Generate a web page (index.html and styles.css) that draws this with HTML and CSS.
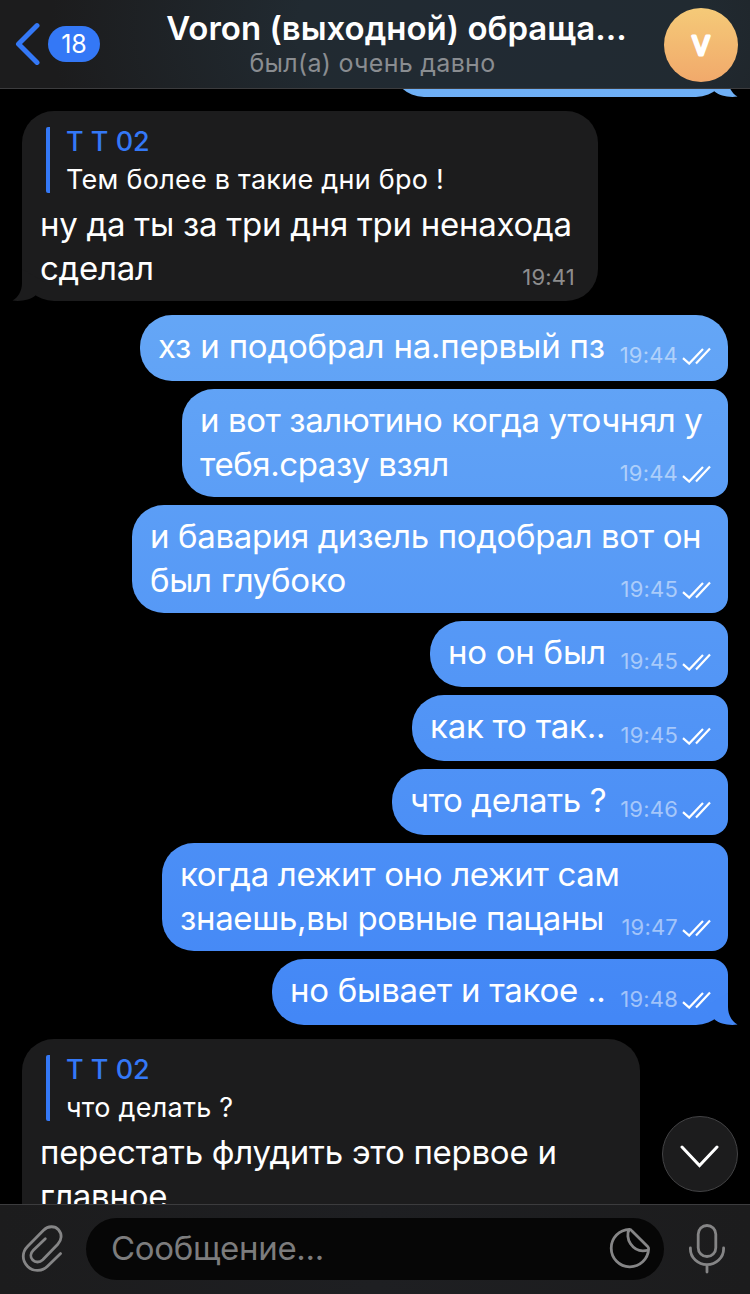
FILE: index.html
```html
<!DOCTYPE html>
<html lang="ru">
<head>
  <meta charset="UTF-8" />
  <meta name="viewport" content="width=device-width, initial-scale=1" />
  <title>Voron</title>
  <link rel="stylesheet" href="styles.css">
</head>
<body>

<!-- Shared shapes -->
<svg class="defs" width="0" height="0">
  <symbol id="checks" viewBox="0 0 30 18">
    <path d="M2 11.2 L8.2 16.6 L22 2 M15 16.6 L29 1.6" fill="none" stroke="#fff" stroke-width="2.2" />
  </symbol>
  <symbol id="tail" viewBox="0 0 34 32">
    <path d="M24 0 V14 C24 22 28 28.5 33.5 31.6 C24 32.6 16 31 10 26 L0 14 Z" />
  </symbol>
</svg>

<div class="app">
  <!-- Header -->
  <header class="header">
    <div class="back">
      <svg width="26" height="44" viewBox="0 0 26 44"><path d="M22 3.6 L3.5 22 L22 40.4" fill="none" stroke="#3478f6" stroke-width="5" stroke-linecap="round" stroke-linejoin="round" /></svg>
      <span class="unread">18</span>
    </div>
    <div class="peer">
      <div class="title">Voron (выходной) обраща...</div>
      <div class="status">был(а) очень давно</div>
    </div>
    <div class="avatar">
      <svg width="74" height="74" viewBox="0 0 74 74"><text x="37" y="47" text-anchor="middle">V</text></svg>
    </div>
  </header>

  <!-- Messages -->
  <main class="chat">
    <div class="bubble out last prev"><svg class="tail"><use href="#tail" /></svg></div>

    <div class="bubble in group reply-a">
      <div class="quote">
        <div class="author">T T 02</div>
        <div class="quoted">Тем более в такие дни бро !</div>
      </div>
      <div class="body">
        <div class="text">ну да ты за три дня три ненахода<br>сделал</div>
        <div class="meta">19:41</div>
      </div>
      <svg class="tail"><use href="#tail" /></svg>
    </div>

    <div class="bubble out first group m1">
      <div class="text">хз и подобрал на.первый пз</div>
      <div class="meta">19:44<svg class="checks"><use href="#checks" /></svg></div>
    </div>
    <div class="bubble out m2">
      <div class="text">и вот залютино когда уточнял у<br>тебя.сразу взял</div>
      <div class="meta">19:44<svg class="checks"><use href="#checks" /></svg></div>
    </div>
    <div class="bubble out m3">
      <div class="text">и бавария дизель подобрал вот он<br>был глубоко</div>
      <div class="meta">19:45<svg class="checks"><use href="#checks" /></svg></div>
    </div>
    <div class="bubble out m4">
      <div class="text">но он был</div>
      <div class="meta">19:45<svg class="checks"><use href="#checks" /></svg></div>
    </div>
    <div class="bubble out m5">
      <div class="text">как то так..</div>
      <div class="meta">19:45<svg class="checks"><use href="#checks" /></svg></div>
    </div>
    <div class="bubble out m6">
      <div class="text">что делать ?</div>
      <div class="meta">19:46<svg class="checks"><use href="#checks" /></svg></div>
    </div>
    <div class="bubble out m7">
      <div class="text">когда лежит оно лежит сам<br>знаешь,вы ровные пацаны</div>
      <div class="meta">19:47<svg class="checks"><use href="#checks" /></svg></div>
    </div>
    <div class="bubble out last m8">
      <div class="text">но бывает и такое ..</div>
      <div class="meta">19:48<svg class="checks"><use href="#checks" /></svg></div>
      <svg class="tail"><use href="#tail" /></svg>
    </div>

    <div class="bubble in group reply-b">
      <div class="quote">
        <div class="author">T T 02</div>
        <div class="quoted">что делать ?</div>
      </div>
      <div class="body">
        <div class="text">перестать флудить это первое и<br>главное</div>
      </div>
    </div>

    <div class="scroll-down">
      <svg width="40" height="24" viewBox="0 0 40 24"><path d="M2 2 L19.5 20.5 L37 2" fill="none" stroke="#fff" stroke-width="3" stroke-linecap="round" /></svg>
    </div>
  </main>

  <!-- Input bar -->
  <footer class="composer">
    <svg class="clip" width="44" height="50" viewBox="0 0 44 50"><path d="M39.6 30.6 L26.5 43.3 C20.5 49 12 48.6 6.7 43.4 C0.6 37.4 1 29 6.5 23.5 L22.5 7.2 C27 2.8 33.8 2.6 37.5 6.7 C41.3 11 40.8 17 36.8 21.2 L21.8 36.7 C18.6 39.8 14.2 39.6 11.7 37 C9.1 34.3 9.3 30.3 12.3 27.3 L24.3 15.8" fill="none" stroke="#858586" stroke-width="2.8" stroke-linecap="round" /></svg>
    <div class="field">
      <span class="placeholder">Сообщение...</span>
      <svg class="sticker" width="42" height="42" viewBox="0 0 42 42"><path d="M20.4 2.4 A18.7 18.7 0 1 0 39.6 22 Q39.7 20.6 38.6 19.4 L23 4 Q21.8 2.5 20.4 2.4 C17.8 6 18.6 12.5 21.5 16.8 C25.5 22.6 32 25.2 39.4 23" fill="none" stroke="#858586" stroke-width="2.8" stroke-linejoin="round" /></svg>
    </div>
    <svg class="mic" width="38" height="52" viewBox="0 0 38 52"><path d="M10.2 11.3 a8.8 8.8 0 0 1 17.6 0 V24.7 a8.8 8.8 0 0 1 -17.6 0 Z M2.4 25 V26 A16.6 15.6 0 0 0 35.6 26 V25 M19 42 V49" fill="none" stroke="#858586" stroke-width="2.8" stroke-linecap="round" /></svg>
  </footer>
</div>

</body>
</html>
```
FILE: styles.css
```css
body {
  margin: 0;
  background: #000;
  color: #fff;
  font-family: Inter, sans-serif;
}
.defs {
  display: block;
}
.app {
  display: flex;
  flex-direction: column;
  width: 750px;
  height: 1294px;
  overflow: hidden;
}

/* header */
.header {
  box-sizing: border-box;
  height: 89px;
  padding: 0 12px 0 15px;
  display: grid;
  grid-template-columns: 100px 1fr 74px;
  background: radial-gradient(ellipse 450px 260px at 500px 30px, #212a33 0%, #212a31 45%, #1c1c1d 100%);
  border-bottom: 1px solid #3c3c3e;
}
.back {
  display: flex;
  align-items: center;
  gap: 7px;
}
.unread {
  width: 52px;
  height: 36px;
  line-height: 36px;
  border-radius: 18px;
  background: #3478f6;
  font-size: 25px;
  text-align: center;
}
.peer {
  text-align: center;
  white-space: nowrap;
}
.title {
  margin-top: 8px;
  padding-left: 14px;
  font-size: 33px;
  line-height: 40px;
  font-weight: 600;
}
.status {
  padding-right: 34px;
  font-size: 25px;
  line-height: 30px;
  letter-spacing: 0.3px;
  color: #8a8d91;
}
.avatar {
  width: 74px;
  height: 74px;
  margin-top: 8px;
  border-radius: 50%;
  background: linear-gradient(#f5ca78, #f1a96b);
}
.avatar svg {
  display: block;
}
.avatar text {
  fill: #fff;
  stroke: #fff;
  stroke-width: 3px;
  stroke-linejoin: round;
  font-size: 26px;
  font-weight: 400;
}

/* messages */
.chat {
  position: relative;
  flex: 1;
  min-height: 0;
  overflow: hidden;
  display: flex;
  flex-direction: column;
  gap: 8px;
}
.bubble {
  position: relative;
  box-sizing: border-box;
  flex: none;
  min-height: 66px;
  border-radius: 32px;
}
.group {
  margin-top: 6px;
}
.out {
  display: grid;
  grid-template-columns: minmax(0, 1fr);
  align-content: start;
  align-self: flex-end;
  margin-right: 22px;
  padding: 9px 17px 11px 18px;
  border-radius: 32px 16px 16px 32px;
  background: linear-gradient(#6fb0f6 90px, #4286f6 1040px) fixed;
}
.first {
  border-top-right-radius: 32px;
}
.last {
  border-bottom-right-radius: 32px;
}
.in {
  margin-left: 22px;
  padding: 16px 18px 10px;
  background: #1c1c1d;
}
.out .text, .out .meta,
.body .text, .body .meta {
  grid-area: 1 / 1;
}
.text {
  font-size: 33px;
  line-height: 44px;
  letter-spacing: -0.26px;
  white-space: nowrap;
}
.meta {
  align-self: end;
  justify-self: end;
  display: flex;
  align-items: center;
  height: 26px;
  font-size: 22px;
  letter-spacing: 0.2px;
  color: rgba(255, 255, 255, 0.5);
}
.body .meta {
  margin-right: 5px;
}
.checks {
  width: 30px;
  height: 18px;
  margin: 1px 0 0 3px;
}
.tail {
  position: absolute;
  right: -10px;
  bottom: 0;
  width: 34px;
  height: 32px;
  fill: #4387f6;
}
.prev .tail {
  fill: #6fb0f6;
}
.in .tail {
  right: auto;
  left: -10px;
  transform: scaleX(-1);
  fill: #1c1c1d;
}

/* quoted message */
.quote {
  display: flex;
  flex-direction: column;
  justify-content: center;
  height: 66px;
  margin-left: 6px;
  padding-left: 16px;
  border-left: 4px solid #3478f6;
  border-radius: 2px;
  font-size: 27px;
  line-height: 38px;
  letter-spacing: 0.25px;
  white-space: nowrap;
}
.author {
  margin-top: 1px;
  color: #3478f6;
  font-weight: 500;
  letter-spacing: 0;
}
.body {
  display: grid;
  grid-template-columns: minmax(0, 1fr);
  margin-top: 9px;
}

.prev { width: 336px; margin-top: -58px; }
.m1 { width: 588px; }
.m2 { width: 546px; }
.m3 { width: 596px; }
.m4 { width: 298px; }
.m5 { width: 316px; }
.m6 { width: 336px; }
.m7 { width: 566px; }
.m8 { width: 456px; }
.m1 .text { letter-spacing: -0.2px; }
.m2 .text { letter-spacing: -0.42px; }
.m3 .text { letter-spacing: -0.36px; }
.m6 .text { letter-spacing: -0.4px; }
.m7 .text { letter-spacing: -0.34px; }
.reply-a { width: 576px; height: 190px; }
.reply-b { width: 618px; height: 234px; }

.scroll-down {
  position: absolute;
  right: 12px;
  bottom: 12px;
  box-sizing: border-box;
  width: 76px;
  height: 76px;
  padding-top: 6px;
  display: flex;
  align-items: center;
  justify-content: center;
  border: 1px solid #434345;
  border-radius: 50%;
  background: #1c1c1d;
}

/* input bar */
.composer {
  box-sizing: border-box;
  height: 90px;
  padding: 13px 24px 14px 21px;
  display: flex;
  align-items: flex-start;
  background: linear-gradient(90deg, #1c1c1d, #1e1f22 50%, #1c1c1d);
  border-top: 1px solid #3c3c3e;
}
.clip {
  margin-top: 5px;
}
.field {
  box-sizing: border-box;
  width: 578px;
  height: 62px;
  margin-left: 21px;
  padding: 0 13px 2px 25px;
  display: flex;
  align-items: center;
  justify-content: space-between;
  border-radius: 31px;
  background: #060606;
}
.placeholder {
  font-size: 33px;
  letter-spacing: -0.3px;
  color: #7c7c7d;
}
.mic {
  margin: 5px 0 0 24px;
}
```
